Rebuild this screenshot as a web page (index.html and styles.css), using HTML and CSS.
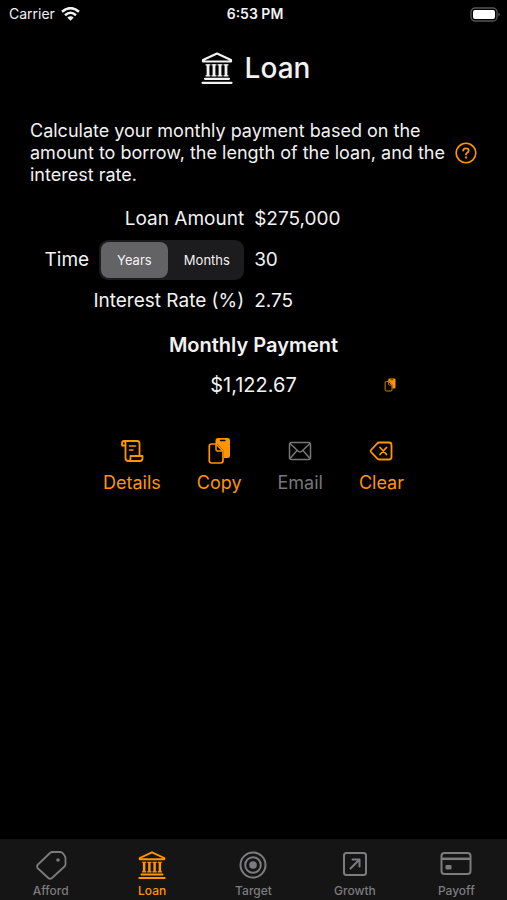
FILE: index.html
```html
<!DOCTYPE html>
<html lang="en">
<head>
<meta charset="utf-8">
<meta name="viewport" content="width=device-width, initial-scale=1">
<title>Loan</title>
<link rel="stylesheet" href="styles.css">
</head>
<body>
<svg class="sprite" aria-hidden="true">
  <symbol id="bank" viewBox="0 0 32 32">
    <g fill="none" stroke="currentColor" stroke-width="2.200" stroke-linejoin="round" stroke-linecap="round">
      <path d="M16 1.500 L30 8 V9.500 H2 V8 Z"/>
      <path d="M4 26.800 H28 M1.500 30.800 H30.500"/>
      <path d="M7 12.500 V24 M13 12.500 V24 M19 12.500 V24 M25 12.500 V24" stroke-width="2.800" stroke-linecap="butt"/>
      <path d="M5 12.800 H9 M11 12.800 H15 M17 12.800 H21 M23 12.800 H27 M5 23.800 H9 M11 23.800 H15 M17 23.800 H21 M23 23.800 H27" stroke-width="1.300"/>
    </g>
  </symbol>
  <symbol id="copy" viewBox="0 0 24 28">
    <path fill="currentColor" d="M11 1 H20.500 Q23 1 23 3.500 V18.500 Q23 21 20.500 21 H17 V14 L10.500 7 H8.500 V3.500 Q8.500 1 11 1 Z"/>
    <path stroke="#000" stroke-width="1.300" stroke-linecap="round" d="M13.500 3.500 H18"/>
    <path fill="#000" stroke="currentColor" stroke-width="1.700" stroke-linejoin="round" d="M4.500 7 H9 L16 14 V23.800 Q16 26 13.800 26 H4.500 Q2.300 26 2.300 23.800 V9.200 Q2.300 7 4.500 7 Z"/>
    <path fill="none" stroke="currentColor" stroke-width="1.500" stroke-linejoin="round" d="M9 7.500 V12.500 Q9 14 10.500 14 H15.500"/>
  </symbol>
</svg>
<div class="screen">
  <header class="status">
    <span class="carrier">Carrier
      <svg width="19" height="14" viewBox="0 0 19 14" fill="none" stroke="currentColor" stroke-width="2.500" aria-hidden="true"><path d="M1 4.800 Q9.500 -2.500 18 4.800"/><path d="M4 8.200 Q9.500 3.400 15 8.200"/><path fill="currentColor" stroke="none" d="M6.300 10.500 Q9.500 7.800 12.700 10.500 L9.500 13.800 Z"/></svg>
    </span>
    <span class="clock">6:53 PM</span>
    <svg class="battery" width="31" height="15" viewBox="0 0 31 15" aria-hidden="true"><rect x="1" y="1" width="26" height="13" rx="4" fill="none" stroke="#555" stroke-width="1.300"/><rect x="3" y="3" width="22" height="9" rx="2" fill="#fff"/><path d="M28.500 5.500 Q31 7.500 28.500 9.500 Z" fill="#666"/></svg>
  </header>
  <main>
    <h1><svg width="32" height="32" aria-hidden="true"><use href="#bank"/></svg>Loan</h1>
    <section class="intro">
      <p>Calculate your monthly payment based on the amount to borrow, the length of the loan, and the interest rate.</p>
      <button type="button" class="help" aria-label="Help">
        <svg width="22" height="22" viewBox="0 0 22 22" fill="none" stroke="currentColor" stroke-width="1.600" stroke-linecap="round" aria-hidden="true"><circle cx="11" cy="11" r="9.800"/><path stroke-width="1.800" d="M8.200 8.700 Q8.400 6.400 11 6.400 Q13.700 6.400 13.700 8.600 Q13.700 9.900 12.200 10.700 Q11 11.400 11 12.600"/><circle cx="11" cy="15.400" r=".4"/></svg>
      </button>
    </section>
    <form class="fields">
      <label for="amount">Loan Amount</label>
      <input id="amount" type="text" value="$275,000">
      <div class="time">
        <label for="term">Time</label>
        <div class="segments" role="group" aria-label="Time unit">
          <label class="segment"><input type="radio" name="unit" checked><span>Years</span></label>
          <label class="segment"><input type="radio" name="unit"><span>Months</span></label>
        </div>
      </div>
      <input id="term" type="text" value="30">
      <label for="rate">Interest Rate (%)</label>
      <input id="rate" type="text" value="2.75">
    </form>
    <section class="result">
      <h2>Monthly Payment</h2>
      <div class="payment">
        <output>$1,122.67</output>
        <button type="button" aria-label="Copy payment"><svg width="12" height="14" aria-hidden="true"><use href="#copy"/></svg></button>
      </div>
    </section>
    <div class="actions">
      <button type="button">
        <svg width="24" height="28" viewBox="0 0 24 28" fill="none" stroke="currentColor" stroke-width="1.800" stroke-linejoin="round" stroke-linecap="round" aria-hidden="true"><path d="M5.500 8.500 H2 V6.500 Q2 4 4 4 H17 Q19.500 4 19.500 6.500 V18 M4 4 Q5.500 4 5.500 6.500 V21 Q5.500 24 8.500 24 H20 Q22.500 24 22.500 21 V19 H10.500 V21.500 Q10.500 24 8.500 24"/><path stroke-width="1.500" d="M9.500 9 H15.500 M9.500 13 H13"/></svg>
        Details
      </button>
      <button type="button">
        <svg width="24" height="28" aria-hidden="true"><use href="#copy"/></svg>
        Copy
      </button>
      <button type="button" disabled>
        <svg width="24" height="28" viewBox="0 0 24 28" fill="none" stroke="currentColor" stroke-width="1.500" stroke-linejoin="round" aria-hidden="true"><rect x="1.500" y="5.500" width="21" height="17" rx="2"/><path d="M2 6.500 L10.500 14.500 Q12 15.700 13.500 14.500 L22 6.500 M2 21.500 L9 13.500 M22 21.500 L15 13.500"/></svg>
        Email
      </button>
      <button type="button">
        <svg width="24" height="28" viewBox="0 0 24 28" fill="none" stroke="currentColor" stroke-width="1.800" stroke-linejoin="round" stroke-linecap="round" aria-hidden="true"><path d="M10 5.500 H20 Q22.500 5.500 22.500 8 V20 Q22.500 22.500 20 22.500 H10 Q9 22.500 8.300 21.700 L2 15 Q1.200 14 2 13 L8.300 6.300 Q9 5.500 10 5.500 Z"/><path d="M11 10.500 L17.500 17.500 M17.500 10.500 L11 17.500"/></svg>
        Clear
      </button>
    </div>
  </main>
  <nav class="tabs">
    <a href="#afford"><svg width="32" height="30" viewBox="0 0 32 30" fill="none" stroke="currentColor" stroke-width="1.800" stroke-linejoin="round" aria-hidden="true"><path d="M17.500 2 H25 Q27 2 28 3.500 L29.500 5.500 Q30.500 7 30.500 8.500 V14 Q30.500 15.500 29.500 16.500 L17 28 Q15 29.500 13.300 28 L3 18.500 Q1 16.500 3 14.500 L15 3 Q16 2 17.500 2 Z"/><circle cx="23" cy="10" r="1.800" fill="currentColor" stroke="none"/></svg>Afford</a>
    <a href="#loan" aria-current="page"><svg width="28" height="30" aria-hidden="true"><use href="#bank"/></svg>Loan</a>
    <a href="#target"><svg width="28" height="30" viewBox="0 0 28 30" fill="none" stroke="currentColor" stroke-width="2" aria-hidden="true"><circle cx="14" cy="15" r="12.500"/><circle cx="14" cy="15" r="7.800"/><circle cx="14" cy="15" r="3.800" fill="currentColor" stroke="none"/></svg>Target</a>
    <a href="#growth"><svg width="28" height="30" viewBox="0 0 28 30" fill="none" stroke="currentColor" stroke-width="2" stroke-linecap="round" stroke-linejoin="round" aria-hidden="true"><rect x="3" y="3" width="22" height="22" rx="2.500"/><path d="M9.500 18.500 L18 10 M11.500 9.500 H18.500 V16.500"/></svg>Growth</a>
    <a href="#payoff"><svg width="32" height="30" viewBox="0 0 32 30" fill="none" stroke="currentColor" stroke-width="2" aria-hidden="true"><rect x="1.500" y="3" width="29" height="21" rx="3"/><path stroke-width="2.500" d="M2 8.800 H30"/><rect x="5.500" y="15" width="6" height="4.500" rx="1" fill="currentColor" stroke="none"/></svg>Payoff</a>
  </nav>
</div>
</body>
</html>
```
FILE: styles.css
```css
* {
  box-sizing: border-box;
}

body {
  margin: 0;
  background: #000;
  color: #f2f2f2;
  font-family: Inter, "Liberation Sans", sans-serif;
  font-size: 20px;
  line-height: 24px;
}

.sprite {
  position: absolute;
  width: 0;
  height: 0;
}

svg {
  display: block;
  flex: none;
}

button,
input {
  border: 0;
  padding: 0;
  background: none;
  color: inherit;
  font: inherit;
}

button {
  color: #ff9500;
}

.screen {
  display: flex;
  flex-direction: column;
  min-height: 100vh;
}

main {
  flex: 1;
}

.status {
  display: grid;
  grid-template-columns: 1fr auto 1fr;
  align-items: center;
  height: 28px;
  padding: 0 6px 0 9px;
  font-size: 14px;
}

.carrier {
  display: flex;
  align-items: center;
  gap: 6px;
}

.clock {
  font-weight: 600;
}

.battery {
  justify-self: end;
}

h1 {
  display: flex;
  justify-content: center;
  align-items: center;
  gap: 12px;
  margin: 22px 0 34px;
  padding-left: 4px;
  font-size: 28px;
  line-height: 36px;
  font-weight: 500;
}

.intro {
  display: flex;
  justify-content: space-between;
  align-items: center;
  gap: 8px;
  padding: 0 30px;
  font-size: 18px;
  line-height: 22px;
}

.intro p {
  margin: 0;
}

.fields {
  display: grid;
  grid-template-columns: 49fr 51fr;
  grid-auto-rows: 41px;
  align-items: center;
  column-gap: 10px;
  padding: 12px 30px 0;
  font-size: 19px;
}

.fields > label {
  justify-self: end;
}

.fields > input {
  width: 100%;
  min-width: 0;
}

.time {
  display: flex;
  justify-content: flex-end;
  align-items: center;
  gap: 10px;
}

.segments {
  display: grid;
  grid-template-columns: 1fr 1fr;
  width: 145px;
  height: 40px;
  padding: 2px;
  border-radius: 9px;
  background: #1c1c1f;
  font-size: 13px;
}

.segment {
  display: grid;
  position: relative;
}

.segment input {
  position: absolute;
  inset: 0;
  margin: 0;
  opacity: 0;
}

.segment span {
  display: grid;
  place-items: center;
  border-radius: 8px;
}

.segment input:checked + span {
  margin-right: 4px;
  background: #636366;
}

h2 {
  margin: 12px 0 16px;
  font-size: 20px;
  line-height: 24px;
  font-weight: 600;
  text-align: center;
}

.payment {
  display: grid;
  grid-template-columns: 1fr auto 1fr;
  align-items: center;
  padding: 0 24px;
}

.payment output {
  grid-column: 2;
}

.payment button {
  justify-self: center;
}

.actions {
  display: flex;
  justify-content: center;
  gap: 36px;
  margin-top: 40px;
  font-size: 18px;
}

.actions button {
  display: flex;
  flex-direction: column;
  align-items: center;
  gap: 6px;
}

.actions button:disabled {
  color: #77777a;
}

.tabs {
  display: grid;
  grid-template-columns: repeat(5, 1fr);
  height: 61px;
  padding-top: 11px;
  background: #151515;
  font-size: 12px;
  line-height: 16px;
  font-weight: 500;
}

.tabs a {
  display: flex;
  flex-direction: column;
  align-items: center;
  gap: 3px;
  color: #7c7c7e;
  text-decoration: none;
}

.tabs a[aria-current] {
  color: #ff9500;
}
```
